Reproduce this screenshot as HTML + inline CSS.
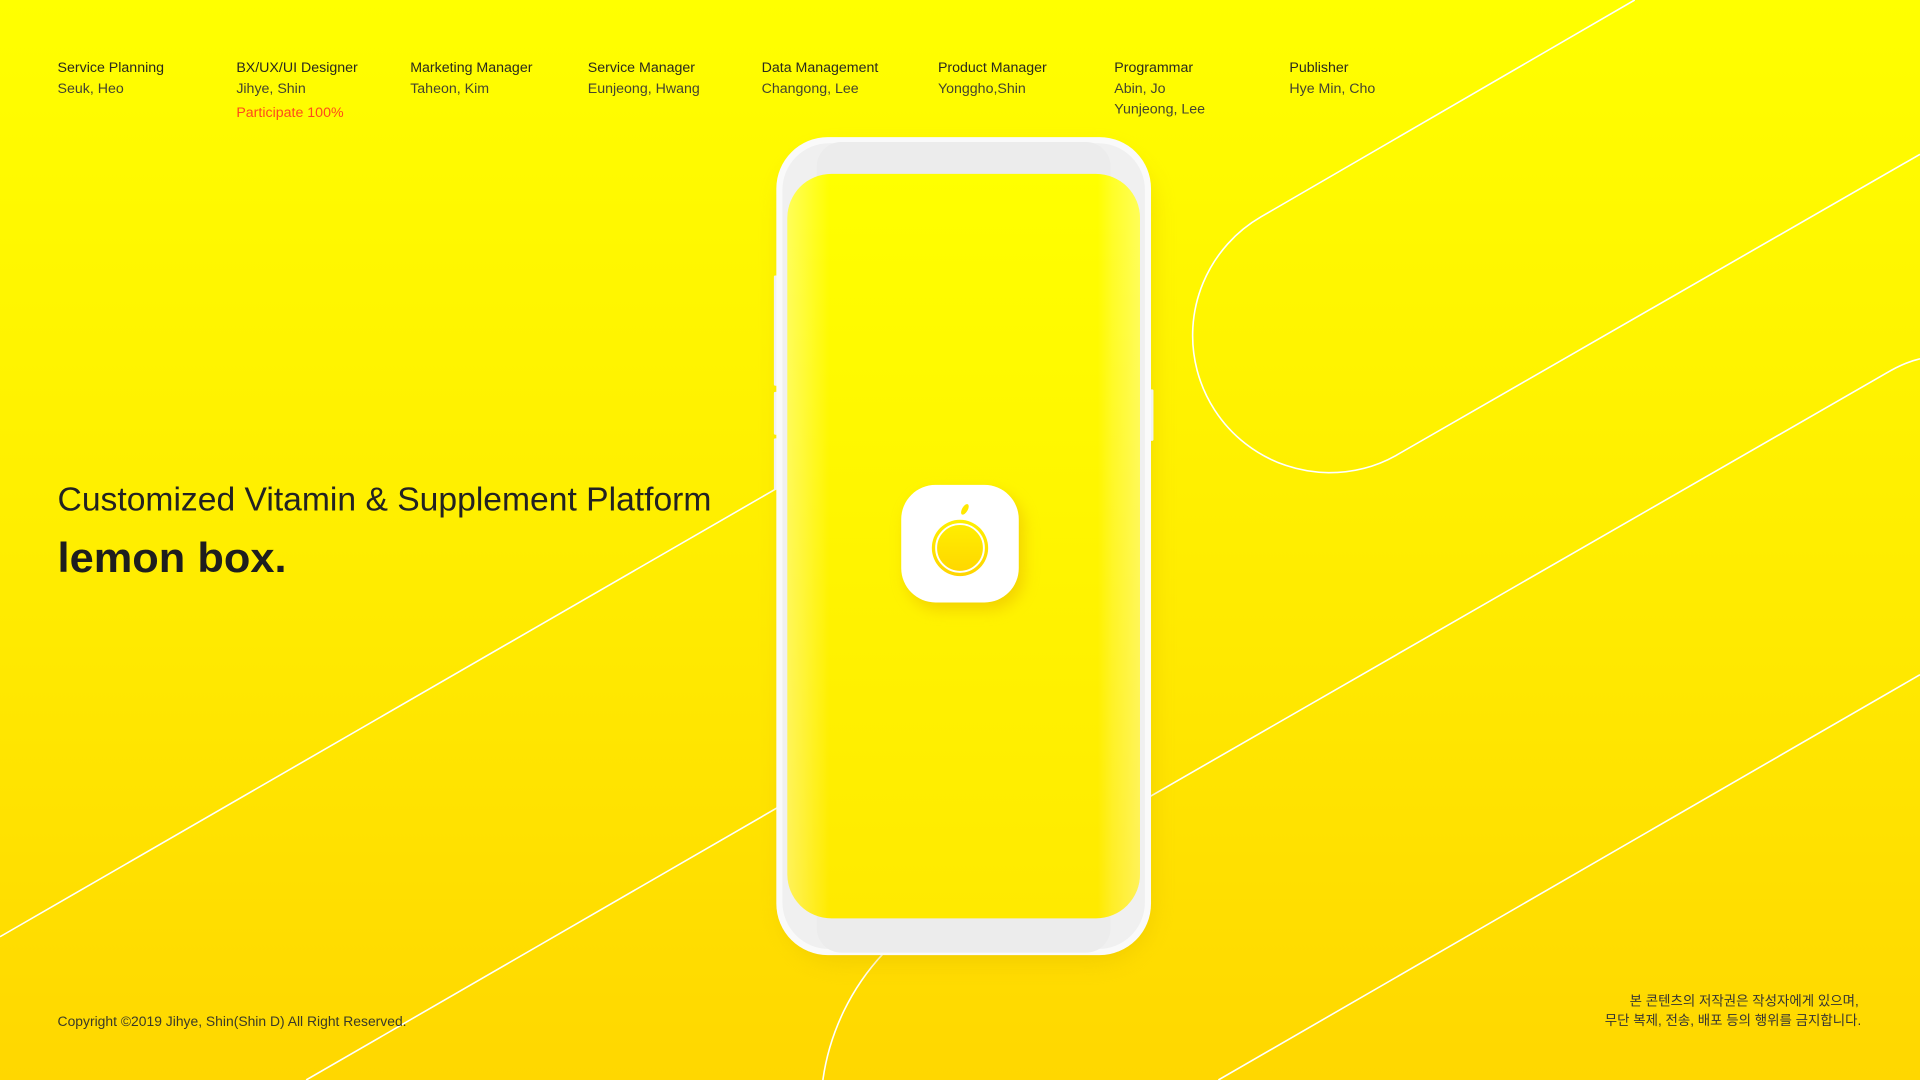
<!DOCTYPE html>
<html><head><meta charset="utf-8"><style>
html,body{margin:0;padding:0;width:1920px;height:1080px;overflow:hidden;background:#FFF000}
svg{display:block}
text{font-family:"Liberation Sans","Noto Sans CJK KR",sans-serif;fill:#2a2a1e}
.h{font-size:11.6px}
.n{font-size:11.6px;fill:#444430}
</style></head><body>
<svg width="1920" height="1080" viewBox="0 0 1568 882" preserveAspectRatio="none" xmlns="http://www.w3.org/2000/svg">
<defs>
<linearGradient id="bg" x1="0" y1="0" x2="0" y2="1">
<stop offset="0" stop-color="#FFFF00"/><stop offset="0.5" stop-color="#FFEE00"/><stop offset="1" stop-color="#FFD700"/>
</linearGradient>
<linearGradient id="scr" x1="0" y1="0" x2="0" y2="1">
<stop offset="0" stop-color="#FFFF00"/><stop offset="1" stop-color="#FFEA00"/>
</linearGradient>
<linearGradient id="edge" x1="0" y1="0" x2="1" y2="0">
<stop offset="0" stop-color="#fff" stop-opacity="0.35"/><stop offset="0.08" stop-color="#fff" stop-opacity="0.12"/><stop offset="0.12" stop-color="#fff" stop-opacity="0"/>
<stop offset="0.88" stop-color="#fff" stop-opacity="0"/><stop offset="0.92" stop-color="#fff" stop-opacity="0.15"/><stop offset="1" stop-color="#fff" stop-opacity="0.35"/>
</linearGradient>
<linearGradient id="ring" x1="0" y1="0" x2="0" y2="1">
<stop offset="0" stop-color="#FFF000"/><stop offset="1" stop-color="#FFD500"/>
</linearGradient>
<filter id="sh" x="-30%" y="-20%" width="160%" height="140%"><feGaussianBlur stdDeviation="10"/></filter>
<filter id="sh2" x="-50%" y="-50%" width="200%" height="200%"><feGaussianBlur stdDeviation="6"/></filter>
</defs>
<rect width="1568" height="882" fill="url(#bg)"/>
<g fill="none" stroke="#fff" stroke-width="1.3">
<line x1="0" y1="765" x2="700" y2="361"/>
<line x1="250" y1="882" x2="700" y2="622"/>
<path d="M900 673 L1540 305 Q1555 296 1568 293"/>
<line x1="995" y1="882" x2="1568" y2="551"/>
<path d="M1335 0 L1030 177 A112 112 0 0 0 1085 386 Q1115 386 1140 372 L1568 126"/>
<path d="M722 778 A190 190 0 0 0 672 882"/>
</g>
<rect x="640" y="125" width="300" height="660" rx="45" fill="#e0b800" opacity="0.45" filter="url(#sh)"/>
<rect x="632" y="225" width="4" height="90" rx="1" fill="#f2f2f2"/>
<rect x="632" y="320" width="4" height="35" rx="1" fill="#f2f2f2"/>
<rect x="632" y="358" width="4" height="42" rx="1" fill="#f2f2f2"/>
<rect x="938" y="318" width="4" height="42" rx="1" fill="#f2f2f2"/>
<rect x="634" y="112" width="306" height="668" rx="42" fill="#fafafa"/>
<rect x="639" y="117" width="296" height="658" rx="38" fill="#f0f0f0"/>
<rect x="667" y="116" width="240" height="662" rx="20" fill="#ececec"/>
<rect x="643" y="142" width="288" height="608" rx="36" fill="url(#scr)"/>
<rect x="643" y="142" width="288" height="608" rx="36" fill="url(#edge)"/>
<rect x="740" y="402" width="96" height="96" rx="28" fill="#e8b800" opacity="0.55" filter="url(#sh2)"/>
<rect x="736" y="396" width="96" height="96" rx="28" fill="#fff"/>
<circle cx="784" cy="447.5" r="23" fill="url(#ring)"/>
<circle cx="784" cy="447.5" r="19.5" fill="none" stroke="#fff" stroke-width="1.6"/>
<ellipse cx="788" cy="416" rx="2.3" ry="4.8" transform="rotate(30 788 416)" fill="#FFE800"/>
<text x="47" y="59" class="h">Service Planning</text>
<text x="193" y="59" class="h">BX/UX/UI Designer</text>
<text x="335" y="59" class="h">Marketing Manager</text>
<text x="480" y="59" class="h">Service Manager</text>
<text x="622" y="59" class="h">Data Management</text>
<text x="766" y="59" class="h">Product Manager</text>
<text x="910" y="59" class="h">Programmar</text>
<text x="1053" y="59" class="h">Publisher</text>
<text x="47" y="76" class="n">Seuk, Heo</text>
<text x="193" y="76" class="n">Jihye, Shin</text>
<text x="193" y="95.5" class="n" style="fill:#ff4a1a">Participate 100%</text>
<text x="335" y="76" class="n">Taheon, Kim</text>
<text x="480" y="76" class="n">Eunjeong, Hwang</text>
<text x="622" y="76" class="n">Changong, Lee</text>
<text x="766" y="76" class="n">Yonggho,Shin</text>
<text x="910" y="76" class="n">Abin, Jo</text>
<text x="910" y="92.5" class="n">Yunjeong, Lee</text>
<text x="1053" y="76" class="n">Hye Min, Cho</text>
<text x="47" y="417" style="font-size:27px;fill:#222" textLength="534" lengthAdjust="spacingAndGlyphs">Customized Vitamin &amp; Supplement Platform</text>
<text x="47" y="467" style="font-size:34px;font-weight:bold;fill:#1e1e1e" textLength="187" lengthAdjust="spacingAndGlyphs">lemon box.</text>
<text x="47" y="838" class="n" style="fill:#3a3a28" textLength="285" lengthAdjust="spacingAndGlyphs">Copyright ©2019 Jihye, Shin(Shin D) All Right Reserved.</text>
<text x="1518" y="821" text-anchor="end" style="font-size:11px;fill:#333">본 콘텐츠의 저작권은 작성자에게 있으며,</text>
<text x="1520" y="837" text-anchor="end" style="font-size:11px;fill:#333">무단 복제, 전송, 배포 등의 행위를 금지합니다.</text>
</svg>
</body></html>
